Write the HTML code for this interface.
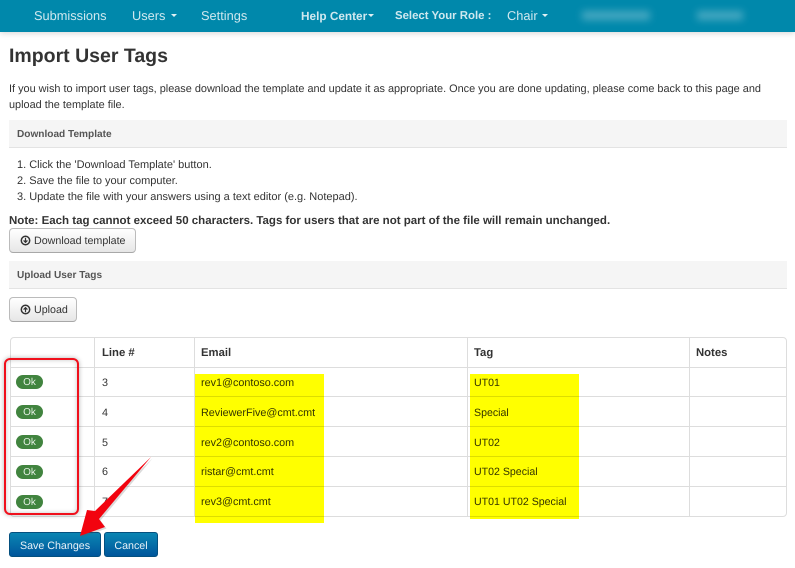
<!DOCTYPE html>
<html lang="en"><head><meta charset="utf-8"><title>Import User Tags</title>
<style>
html,body{margin:0;padding:0;background:#fff}
body{width:795px;height:568px;overflow:hidden;position:relative;font-family:"Liberation Sans",sans-serif;font-size:12px;color:#333;text-rendering:geometricPrecision}
.t{position:absolute;white-space:nowrap;line-height:16px}
#nav{position:absolute;left:0;top:0;width:795px;height:32px;background:#0088ab;box-shadow:0 1px 6px rgba(0,0,0,.18)}
#nav .t{line-height:32px;top:0;font-size:12.8px;color:#cfe8ef}
#nav b{color:#f0f8fa;font-size:12px}
.car{position:absolute;top:14px;width:0;height:0;border-left:3px solid transparent;border-right:3px solid transparent;border-top:3px solid #dff0f4}
.blur{position:absolute;top:11px;height:9px;background:#5fb3c9;filter:blur(4px);opacity:.75}
h1{position:absolute;left:9px;top:45px;margin:0;font-size:19.5px;line-height:23px;font-weight:bold;color:#333;white-space:nowrap}
.bar{position:absolute;left:9px;width:778px;background:#f5f5f5;border-bottom:1px solid #e3e3e3}
.bar span{position:absolute;left:8px;top:0;font-size:10.1px;line-height:14px;font-weight:bold;color:#555;white-space:nowrap}
.btn{position:absolute;box-sizing:border-box;height:25px;border:1px solid #bbb;border-bottom-color:#a8a8a8;border-radius:4px;background:linear-gradient(#fff,#e6e6e6);color:#333;font-size:10.7px;line-height:25px;padding-left:24px;white-space:nowrap}
.btn svg{position:absolute;left:10px;top:6px}
.pri{position:absolute;box-sizing:border-box;height:25px;top:532px;border:1px solid #04507f;border-radius:3px;background:linear-gradient(#0a85b3,#00569c);color:#e8f2f7;font-size:10.7px;line-height:26px;text-align:center}
#tbl{position:absolute;left:10px;top:337px;width:775px;height:178px;border:1px solid #ddd;border-radius:4px}
.h{position:absolute;background:#ddd;height:1px;left:10px;width:777px}
.v{position:absolute;background:#ddd;width:1px;top:338px;height:178px}
.th{font-size:11.3px;font-weight:bold}
.td{font-size:10.8px}
.tg{font-size:10.6px}
.ok{position:absolute;left:16px;width:27px;height:14px;border-radius:7px;background:#41843f;color:#e8f2e8;font-size:10px;line-height:15px;text-align:center}
.y{position:absolute;background:#ff0;mix-blend-mode:multiply}
.b{font-size:10.9px}
</style></head><body>
<div id="nav">
<span class="t" style="left:34px">Submissions</span>
<span class="t" style="left:132px">Users</span><i class="car" style="left:171px"></i>
<span class="t" style="left:201px">Settings</span>
<b class="t" style="left:301px;font-size:11.8px">Help Center</b><i class="car" style="left:368px"></i>
<b class="t" style="left:395px;font-size:11.4px">Select Your Role :</b>
<span class="t" style="left:507px">Chair</span><i class="car" style="left:542px"></i>
<div class="blur" style="left:582px;width:68px"></div>
<div class="blur" style="left:697px;width:46px"></div>
</div>
<h1>Import User Tags</h1>
<div class="t b" style="left:9px;top:81px">If you wish to import user tags, please download the template and update it as appropriate. Once you are done updating, please come back to this page and</div>
<div class="t b" style="left:9px;top:97px">upload the template file.</div>
<div class="bar" style="top:120px;height:27px"><span style="top:8px">Download Template</span></div>
<div class="t" style="left:17px;top:157px;font-size:11px">1. Click the 'Download Template' button.</div>
<div class="t" style="left:17px;top:173px;font-size:11px">2. Save the file to your computer.</div>
<div class="t" style="left:17px;top:189px;font-size:11px">3. Update the file with your answers using a text editor (e.g. Notepad).</div>
<div class="t" style="left:9px;top:213px;font-size:11.5px;font-weight:bold">Note: Each tag cannot exceed 50 characters. Tags for users that are not part of the file will remain unchanged.</div>
<div class="btn" style="left:9px;top:228px;width:127px">
<svg width="11" height="11" viewBox="0 0 11 11"><circle cx="5.5" cy="5.5" r="4.2" fill="none" stroke="#333" stroke-width="1.5"/><path d="M5.5 2.8v4.4M3.6 5.4l1.9 2 1.9-2" fill="none" stroke="#333" stroke-width="1.2"/></svg>Download template</div>
<div class="bar" style="top:261px;height:27px"><span style="top:8px">Upload User Tags</span></div>
<div class="btn" style="left:9px;top:297px;width:68px">
<svg width="11" height="11" viewBox="0 0 11 11"><circle cx="5.5" cy="5.5" r="4.2" fill="none" stroke="#333" stroke-width="1.5"/><path d="M5.5 8.2V3.8M3.6 5.6l1.9-2 1.9 2" fill="none" stroke="#333" stroke-width="1.2"/></svg>Upload</div>

<div id="tbl"></div>
<div class="h" style="top:367px"></div>
<div class="h" style="top:396px"></div>
<div class="h" style="top:426px"></div>
<div class="h" style="top:456px"></div>
<div class="h" style="top:486px"></div>
<div class="v" style="left:94px"></div>
<div class="v" style="left:194px"></div>
<div class="v" style="left:467px"></div>
<div class="v" style="left:689px"></div>

<span class="t th" style="left:102px;top:345px">Line #</span>
<span class="t th" style="left:201px;top:345px">Email</span>
<span class="t th" style="left:474px;top:345px">Tag</span>
<span class="t th" style="left:696px;top:345px">Notes</span>

<span class="ok" style="top:375px">Ok</span>
<span class="ok" style="top:405px">Ok</span>
<span class="ok" style="top:435px">Ok</span>
<span class="ok" style="top:465px">Ok</span>
<span class="ok" style="top:495px">Ok</span>

<span class="t td" style="left:102px;top:375px">3</span>
<span class="t td" style="left:102px;top:405px">4</span>
<span class="t td" style="left:102px;top:435px">5</span>
<span class="t td" style="left:102px;top:464px">6</span>
<span class="t td" style="left:102px;top:494px">7</span>

<span class="t td" style="left:201px;top:375px">rev1@contoso.com</span>
<span class="t td" style="left:201px;top:405px">ReviewerFive@cmt.cmt</span>
<span class="t td" style="left:201px;top:435px">rev2@contoso.com</span>
<span class="t td" style="left:201px;top:464px">ristar@cmt.cmt</span>
<span class="t td" style="left:201px;top:494px">rev3@cmt.cmt</span>

<span class="t tg" style="left:474px;top:375px">UT01</span>
<span class="t tg" style="left:474px;top:405px">Special</span>
<span class="t tg" style="left:474px;top:435px">UT02</span>
<span class="t tg" style="left:474px;top:464px">UT02 Special</span>
<span class="t tg" style="left:474px;top:494px">UT01 UT02 Special</span>

<div class="y" style="left:195px;top:374px;width:129px;height:149px"></div>
<div class="y" style="left:470px;top:374px;width:109px;height:145px"></div>

<div class="pri" style="left:9px;width:92px">Save Changes</div>
<div class="pri" style="left:104px;width:54px">Cancel</div>

<div style="position:absolute;left:4px;top:358px;width:71px;height:153px;border:2px solid #f0101c;border-radius:6px;box-shadow:0 0 5px rgba(0,0,0,.3),inset 0 0 5px rgba(0,0,0,.22)"></div>
<svg style="position:absolute;left:0;top:0;overflow:visible" width="795" height="568" viewBox="0 0 795 568">
<path d="M151 457L95 511L87 510L80 536L105 527L99 519Z" fill="#555" opacity=".22" transform="translate(1.5 1.5)"/>
<path d="M151 457L95 511L87 510L80 536L105 527L99 519Z" fill="#f2030f"/>
</svg>
</body></html>
